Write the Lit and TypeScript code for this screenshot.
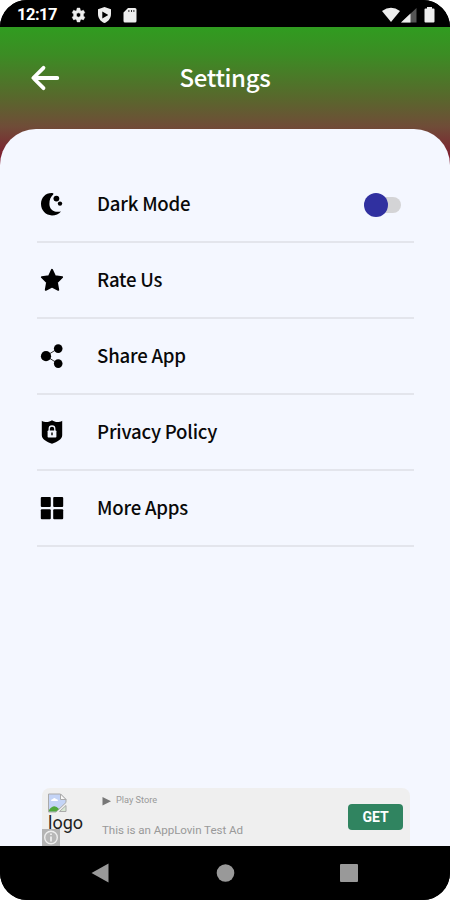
import { LitElement, html, css, svg } from "lit";
import { customElement, property, state } from "lit/decorators.js";

const icons: Record<string, unknown> = {
  moon: svg`<path d="M12.2 1.1C5.600.8 1 5.800 1 12.100S5.800 23.400 12 23.400c3.700 0 6.900-1.200 9-4-7.400 1.600-11.600-2.200-11.600-7.500 0-4.400 1.200-7 3.800-9.500.6-.7.2-1.200-1-1.300z"/><circle cx="16.400" cy="6.600" r="2.900"/><circle cx="20" cy="11.600" r="2.200"/>`,
  star: svg`<path d="M12 1.7l3 6.5 7.2 1-5.2 5.1 1.3 7.6L12 18.600l-6.300 3.300L7 14.300 1.800 9.200l7.200-1z" stroke="#000" stroke-width="1.8" stroke-linejoin="round"/>`,
  share: svg`<path d="M18 4.500L6 12l12 7.600" fill="none" stroke="#333" stroke-width="1"/><circle cx="18.200" cy="4.600" r="4.300"/><circle cx="6" cy="12.200" r="5.100"/><circle cx="18.200" cy="19.600" r="4.300"/>`,
  shield: svg`<path d="M1.800.7C5 2.800 9 2.500 12 .3c3 2.200 7 2.500 10.200.4v14.600c0 4.300-5 6.500-10.200 8.500-5.200-2-10.200-4.200-10.200-8.500z"/><path d="M9.200 11V8.800a2.800 2.800 0 0 1 5.600 0V11" fill="none" stroke="#f4f7ff" stroke-width="1.300"/><rect x="7.600" y="10.400" width="8.800" height="7.200" rx=".8" fill="#f4f7ff"/><path d="M12 12.500v2.800" stroke="#000" stroke-width="1.400"/>`,
  grid: svg`<rect x=".8" y="1" width="10" height="10" rx="1"/><rect x="13.2" y="1" width="10" height="10" rx="1"/><rect x=".8" y="13.2" width="10" height="10" rx="1"/><rect x="13.2" y="13.2" width="10" height="10" rx="1"/>`,
};

@customElement("setting-row")
class SettingRow extends LitElement {
  @property() icon = "";
  @property() label = "";
  static styles = css`
    :host { display: flex; align-items: center; box-sizing: border-box; height: 76px; padding-bottom: 2px; border-bottom: 2px solid #e3e5ec; color: #090909; }
    svg { width: 24px; height: 24px; margin: 2px 32.4px 0 3.2px; flex: none; }
    .label { flex: 1; font-size: 18.6px; font-weight: 500; line-height: 28px; letter-spacing: -.22px; padding-left: .5px; }
  `;
  render() {
    return html`<svg viewBox="0 0 24 24">${icons[this.icon]}</svg><span class="label">${this.label}</span><slot></slot>`;
  }
}

@customElement("app-root")
class AppRoot extends LitElement {
  @state() dark = false;
  static styles = css`
    :host { display: block; width: 450px; height: 900px; background: #fff; font-family: "Noto Sans CJK SC", "Noto Sans", sans-serif; }
    .phone { height: 900px; display: flex; flex-direction: column; overflow: hidden; border-radius: 27px; background: #000; }
    .status { height: 27px; flex: none; display: flex; align-items: center; color: #fff; background: #000; padding: 3px 15px 0 17px; box-sizing: border-box; }
    .time { font: 700 16.5px/20px Roboto, sans-serif; width: 54px; letter-spacing: -.5px; }
    .status svg { height: 16px; fill: #eee; flex: none; }
    .shield, .card { margin-left: 11px; }
    .battery { margin-left: 7px; }
    .space { flex: 1; }
    .body { flex: 1; display: flex; flex-direction: column; background: linear-gradient(#309c20 0, #3c8c24 28px, #58682c 70px, #704c38 100px, #801c30 132px); }
    header { height: 102px; display: grid; grid-template-columns: 90px 1fr 90px; align-items: center; flex: none; color: #fff; }
    header svg { width: 30px; height: 28px; margin-left: 30px; }
    h1 { margin: 0 0 3px; text-align: center; font-size: 24px; font-weight: 500; line-height: 36px; letter-spacing: -.35px; }
    .sheet { flex: 1; display: flex; flex-direction: column; padding: 38px 36px 0 37px; border-radius: 36px 36px 0 0; background: #f4f7ff; }
    .toggle { position: relative; width: 37px; height: 24px; margin: 3px 13px 0 0; cursor: pointer; }
    .track { position: absolute; left: 10px; top: 4px; width: 27px; height: 16px; border-radius: 8px; background: #d4d4d6; }
    .thumb { position: absolute; left: 0; top: 0; width: 24px; height: 24px; border-radius: 50%; background: #3030a0; }
    .thumb.on { left: 13px; }
    .ad { height: 58px; margin: auto 4px 0 5px; display: flex; background: #efefef; border-radius: 8px 8px 0 0; position: relative; box-sizing: border-box; padding: 5px 7px 0 6px; font-family: Roboto, sans-serif; }
    .logo { width: 54px; color: #222; font-size: 18px; line-height: 20px; }
    .logo svg { display: block; width: 21px; height: 20px; margin-left: -1px; }
    .info { position: absolute; left: 0; bottom: 0; width: 18px; height: 17px; }
    .copy { color: #999; flex: 1; }
    .store { display: flex; align-items: center; font-size: 9.2px; line-height: 14px; height: 14px; gap: 5px; }
    .store svg { width: 9px; height: 10px; margin-top: 2px; }
    .tagline { font-size: 11.6px; letter-spacing: -.05px; line-height: 16px; margin-top: 15px; }
    .get { width: 55px; height: 26px; margin-top: 11px; padding: 0; border: 0; border-radius: 4px; background: #308460; color: #fff; font: 700 14px/26px Roboto, sans-serif; }
    nav { height: 54px; flex: none; background: #000; display: flex; justify-content: space-between; align-items: center; padding: 0 91px; }
    nav svg { width: 20px; height: 22px; fill: #999; }
  `;
  render() {
    return html`<div class="phone">
      <div class="status">
        <span class="time">12:17</span>
        <svg width="15" viewBox="0 0 16 16"><path fill-rule="evenodd" d="M6.5.6h3l.4 2.200 1.300.8 2-.8 1.600 2.700L13.200 7v2l1.600 1.400-1.600 2.800-2-.8-1.300.8-.4 2.200h-3l-.4-2.200-1.300-.8-2 .8-1.600-2.800L2.800 9V7L1.200 5.500l1.600-2.700 2 .8 1.300-.8zM8 5.700a2.300 2.300 0 1 0 0 4.600 2.300 2.300 0 0 0 0-4.600z" stroke="#eee" stroke-width=".5"/></svg>
        <svg class="shield" width="15" viewBox="0 0 15 16"><path fill-rule="evenodd" d="M7.500 0L14 2.300V7c0 4.200-2.700 7.600-6.500 9C3.700 14.600 1 11.200 1 7V2.300zM5.300 4.400v7l6-3.500z"/></svg>
        <svg class="card" width="14" viewBox="0 0 14 16"><path fill-rule="evenodd" d="M5 1h7q1.500 0 1.500 1.500V14q0 1.500-1.500 1.500H2Q.5 15.500.5 14V5.500zM5.500 3v2h.8V3zM8 3v2h.8V3zM10.500 3v2h.8V3z"/></svg>
        <span class="space"></span>
        <svg width="20" viewBox="0 0 20 16"><path d="M1 4Q10-2.500 19 4L10 15z"/></svg>
        <svg width="16" viewBox="0 0 16 16"><path d="M0 15.500L15.500 1v14.500z" fill="#555"/><path d="M0 15.500L9.500 6.600V15.500z"/></svg>
        <svg class="battery" width="11" viewBox="0 0 11 16"><path d="M3 0h5v1.500h1.500q1 0 1 1v12q0 1-1 1h-8q-1 0-1-1v-12q0-1 1-1H3z"/></svg>
      </div>
      <div class="body">
        <header>
          <svg viewBox="0 0 30 28" fill="none" stroke="#fff" stroke-width="3.8" stroke-linecap="round" stroke-linejoin="round"><path d="M27.300 14H3.500M13.500 3.800L3.300 14l10.200 10.200"/></svg>
          <h1>Settings</h1>
        </header>
        <main class="sheet">
          <setting-row icon="moon" label="Dark Mode"><span class="toggle" @click=${() => (this.dark = !this.dark)}><span class="track"></span><span class="thumb ${this.dark ? "on" : ""}"></span></span></setting-row>
          <setting-row icon="star" label="Rate Us"></setting-row>
          <setting-row icon="share" label="Share App"></setting-row>
          <setting-row icon="shield" label="Privacy Policy"></setting-row>
          <setting-row icon="grid" label="More Apps"></setting-row>
          <section class="ad">
            <div class="logo">
              <svg viewBox="0 0 21 20"><path d="M1.500 1h12l5.500 5.500v3L9 19H1.500z" fill="#c4d4f6" stroke="#aaa"/><path d="M13.500 1v5.500H19z" fill="#f8f8f8" stroke="#aaa"/><path d="M4 8q0-2 2-2 1-2 3 0 2 0 2 2z" fill="#fff"/><path d="M2 18.500V17q5-7 10-1l-3 2.500z" fill="#50a83c"/><path d="M12.500 18.500l6.500-6v6z" fill="#d8e8d4" stroke="#aaa"/></svg>
              logo
            </div>
            <svg class="info" viewBox="0 0 18 17"><rect width="18" height="17" fill="#b4b4b4"/><circle cx="9" cy="8.500" r="6.300" fill="#b8b8b8" stroke="#eee" stroke-width="1.400"/><path d="M9 7.500v5M9 4.500v1.600" stroke="#eee" stroke-width="1.800"/></svg>
            <div class="copy">
              <div class="store"><svg viewBox="0 0 9 10"><path d="M.5 1L9 5.200.5 9.500z" fill="#777"/></svg>Play Store</div>
              <div class="tagline">This is an AppLovin Test Ad</div>
            </div>
            <button class="get">GET</button>
          </section>
        </main>
      </div>
      <nav>
        <svg viewBox="0 0 20 22"><path d="M.5 11L17.500 1.500v19z"/></svg>
        <svg viewBox="0 0 20 22"><circle cx="10.500" cy="11" r="8.800"/></svg>
        <svg viewBox="0 0 20 22"><rect x="1" y="2" width="18" height="18" rx="1"/></svg>
      </nav>
    </div>`;
  }
}
